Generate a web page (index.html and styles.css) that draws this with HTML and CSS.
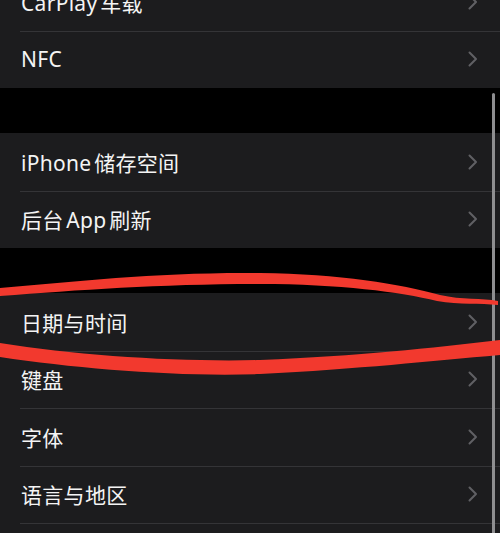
FILE: index.html
```html
<!DOCTYPE html>
<html lang="zh-CN">
<head>
<meta charset="utf-8">
<title>设置</title>
<link rel="stylesheet" href="styles.css">
</head>
<body>
<div class="screen">
  <div class="list">
    <div class="group first">
      <div class="row"><span class="label">CarPlay 车载</span><svg class="chev" viewBox="0 0 10 16"><polyline points="1.5,1.5 8,8 1.5,14.5"/></svg></div>
      <div class="row"><span class="label">NFC</span><svg class="chev" viewBox="0 0 10 16"><polyline points="1.5,1.5 8,8 1.5,14.5"/></svg></div>
    </div>
    <div class="group">
      <div class="row"><span class="label">iPhone 储存空间</span><svg class="chev" viewBox="0 0 10 16"><polyline points="1.5,1.5 8,8 1.5,14.5"/></svg></div>
      <div class="row"><span class="label">后台 App 刷新</span><svg class="chev" viewBox="0 0 10 16"><polyline points="1.5,1.5 8,8 1.5,14.5"/></svg></div>
    </div>
    <div class="group">
      <div class="row"><span class="label">日期与时间</span><svg class="chev" viewBox="0 0 10 16"><polyline points="1.5,1.5 8,8 1.5,14.5"/></svg></div>
      <div class="row"><span class="label">键盘</span><svg class="chev" viewBox="0 0 10 16"><polyline points="1.5,1.5 8,8 1.5,14.5"/></svg></div>
      <div class="row"><span class="label">字体</span><svg class="chev" viewBox="0 0 10 16"><polyline points="1.5,1.5 8,8 1.5,14.5"/></svg></div>
      <div class="row"><span class="label">语言与地区</span><svg class="chev" viewBox="0 0 10 16"><polyline points="1.5,1.5 8,8 1.5,14.5"/></svg></div>
      <div class="row"></div>
    </div>
  </div>
  <div class="scrollbar"></div>
  <svg class="scribble" viewBox="0 0 500 533" preserveAspectRatio="none">
    <path d="M0,288 C80,281 160,272 260,273 C340,274 400,284 440,295 C462,300 482,298 498,301 L498,305 C480,303 460,305 437,301 C400,292 340,284 260,284 C160,284 80,290 0,296 Z"/>
    <path d="M0,343 C80,356 180,362 260,360 C360,356 430,348 500,340 L500,355 C430,361 360,369 260,374 C180,377 80,369 0,357 Z"/>
  </svg>
</div>
</body>
</html>
```
FILE: styles.css
```css
* { box-sizing: border-box; }
html, body {
  margin: 0;
  padding: 0;
  background: #000;
}
.screen {
  position: relative;
  width: 500px;
  height: 533px;
  overflow: hidden;
  background: #000;
  font-family: "Noto Sans", "Noto Sans CJK SC", sans-serif;
}
.list {
  display: flex;
  flex-direction: column;
  gap: 45px;
  margin-top: -27px;
}
.group {
  display: flex;
  flex-direction: column;
  background: #1c1c1e;
}
.row {
  position: relative;
  height: 57.5px;
  display: flex;
  align-items: center;
  justify-content: space-between;
  padding: 0 22px 0 21px;
}
.row + .row::before {
  content: "";
  position: absolute;
  top: 0;
  left: 20px;
  right: 0;
  height: 1px;
  background: #343437;
}
.label {
  color: #f4f4f4;
  font-size: 21px;
  letter-spacing: 0.3px;
  word-spacing: -3px;
}
.chev {
  width: 10px;
  height: 16px;
  fill: none;
  stroke: #606064;
  stroke-width: 2;
  stroke-linecap: round;
  stroke-linejoin: round;
}
.scrollbar {
  position: absolute;
  left: 492px;
  top: 93px;
  width: 3px;
  height: 460px;
  border-radius: 2px;
  background: #8e8e90;
}
.scribble {
  position: absolute;
  left: 0;
  top: 0;
  width: 500px;
  height: 533px;
  fill: #f2392e;
}
```
